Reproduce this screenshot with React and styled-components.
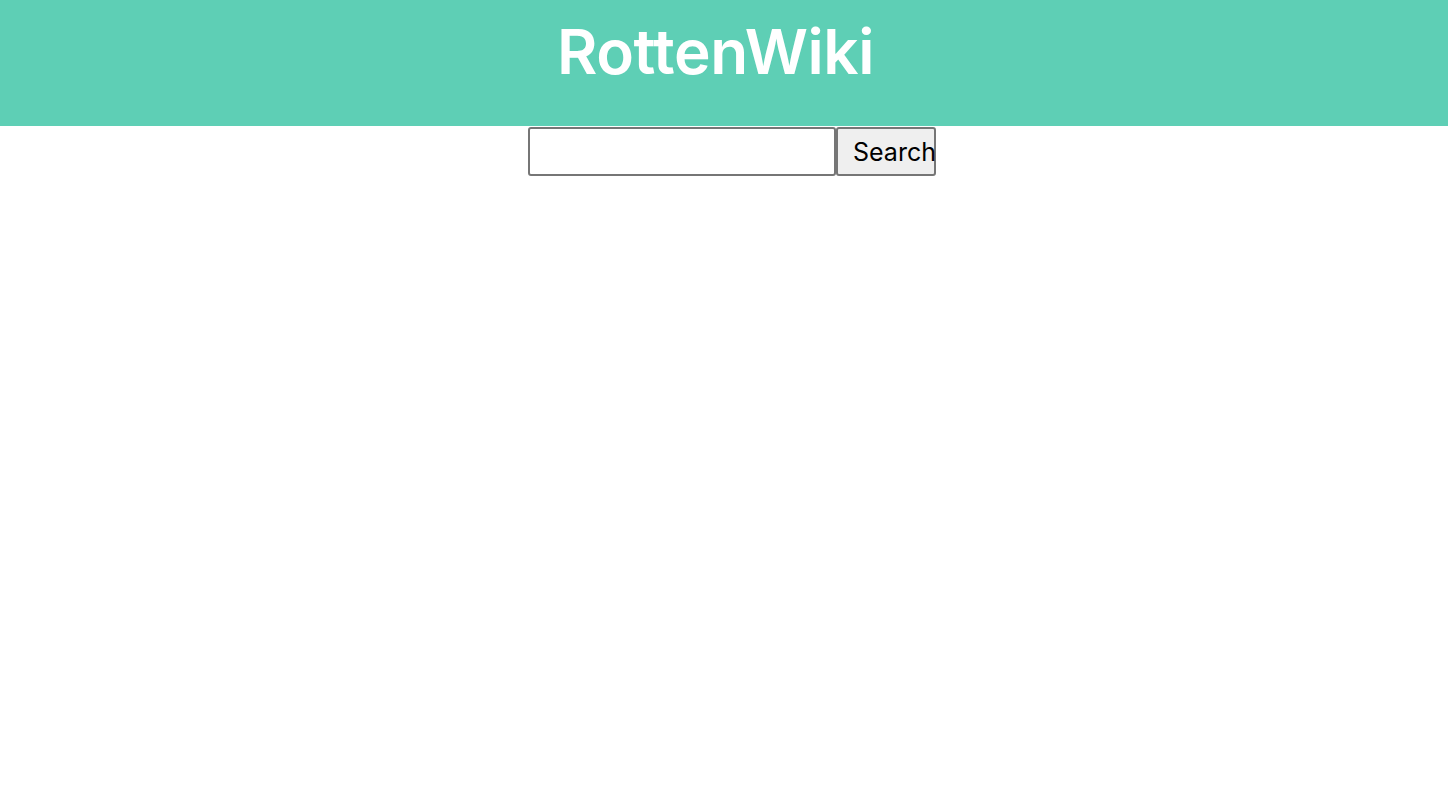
import React from "react";
import styled, { createGlobalStyle } from "styled-components";

const GlobalStyle = createGlobalStyle`
  body {
    margin: 0;
    background: #ffffff;
    font-family: Inter, "Noto Sans", sans-serif;
  }
`;

const App = () => (
  <>
    <GlobalStyle />
    <Header>
      <Title>RottenWiki</Title>
    </Header>
    <SearchForm onSubmit={e => e.preventDefault()}>
      <SearchInput type="text" />
      <SearchButton type="submit">Search</SearchButton>
    </SearchForm>
  </>
);

export default App;

const Header = styled.header`
  height: 126px;
  background-color: #5ecfb5;
  display: flex;
  justify-content: center;
  padding-right: 17px;
`;

const Title = styled.h1`
  margin: 17px 0 0;
  color: #ffffff;
  font-family: Inter, "Noto Sans", sans-serif;
  font-size: 62px;
  font-weight: 600;
  letter-spacing: -0.4px;
  line-height: 70px;
  font-variant-ligatures: none;
  font-feature-settings: "liga" 0, "calt" 0;
`;

const SearchForm = styled.form`
  display: flex;
  justify-content: center;
  padding: 1px 0 0 16px;
  margin: 0;
`;

const SearchInput = styled.input`
  box-sizing: border-box;
  width: 308px;
  height: 49px;
  margin: 0;
  padding: 0 8px;
  border: 2px solid #767676;
  border-radius: 3px;
  font-family: Inter, sans-serif;
  font-size: 24px;
`;

const SearchButton = styled.button`
  box-sizing: border-box;
  width: 100px;
  height: 49px;
  margin: 0;
  padding: 0 0 0 15px;
  border: 2px solid #767676;
  border-radius: 3px;
  background: #efefef;
  color: #000000;
  font-family: Inter, sans-serif;
  font-size: 25px;
  text-align: left;
  white-space: nowrap;
  overflow: visible;
`;
